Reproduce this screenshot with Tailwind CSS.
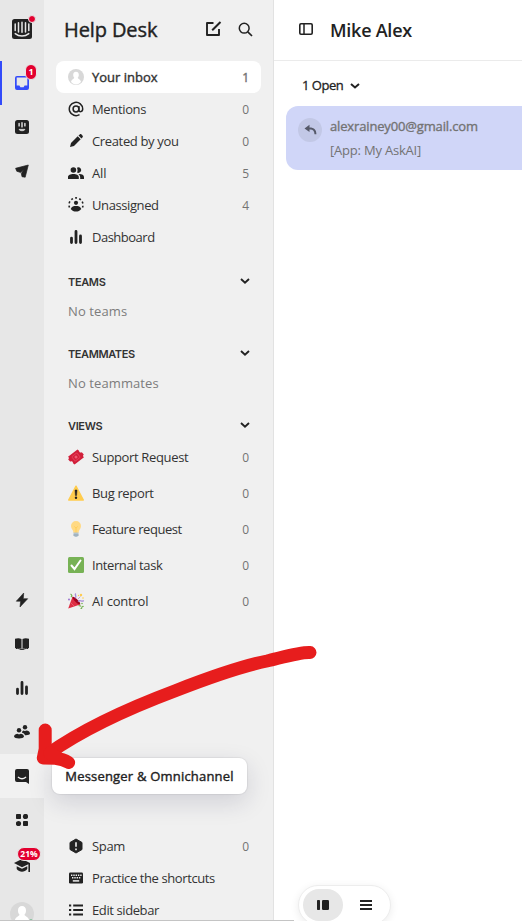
<!DOCTYPE html>
<html lang="en">
<head>
<meta charset="utf-8">
<title>Help Desk</title>
<script src="https://cdn.jsdelivr.net/npm/@tailwindcss/browser@4"></script>
</head>
<body class="relative h-[921px] w-[522px] overflow-hidden bg-white font-['Open_Sans','Noto_Sans',sans-serif] text-[13px] text-[#222]">
<div class="flex h-full">
  <!-- Icon rail -->
  <nav class="flex w-[44px] shrink-0 flex-col bg-[#e7e7e7]">
    <div class="relative flex h-[61px] items-center justify-center pb-[3px]">
      <svg width="20" height="20" viewBox="0 0 20 20"><rect width="20" height="20" rx="2.500" fill="#222"/><path d="M3.200 5v6.500M6.500 3.700v9.300M10 3.300v10M13.500 3.700v9.300M16.800 5v6.500" stroke="#e7e7e7" stroke-width="1.500" stroke-linecap="round"/><path d="M3.200 14.600c4 3.200 9.600 3.200 13.600 0" fill="none" stroke="#e7e7e7" stroke-width="1.400" stroke-linecap="round"/></svg>
      <span class="absolute left-[28px] top-[15px] size-2 rounded-full border border-[#e7e7e7] bg-[#e3002f]"></span>
    </div>
    <div class="relative flex h-11 items-center justify-center border-l-2 border-[#334bfa] pr-[2px]">
      <svg width="14" height="14" viewBox="0 0 14 14"><path fill-rule="evenodd" fill="#334bfa" d="M2 0h10a2 2 0 0 1 2 2v10a2 2 0 0 1-2 2H2a2 2 0 0 1-2-2V2a2 2 0 0 1 2-2Zm-.3 1.600v8h2.700l1 1.700h3.200l1-1.700h2.700v-8Z"/></svg>
      <span class="absolute left-[23px] top-[3px] flex h-4 w-3 items-center justify-center rounded-full border border-[#e7e7e7] bg-[#e3002f] text-[9px] font-bold text-white">1</span>
    </div>
    <div class="flex h-11 items-center justify-center">
      <svg width="14" height="14" viewBox="0 0 14 14"><rect width="14" height="14" rx="2.500" fill="#222"/><path d="M4.100 3.500v2.400M7 2.700v4.200M9.900 3.500v2.400" stroke="#e7e7e7" stroke-width="1.400" stroke-linecap="round"/><path d="M4 9.300h6c-.6 2-5.400 2-6 0Z" fill="#e7e7e7" stroke="#e7e7e7" stroke-width=".5"/></svg>
    </div>
    <div class="flex h-11 items-center justify-center">
      <svg width="14" height="14" viewBox="0 0 14 14"><path d="M13.300 1 10.200 13.200 7 12.700 6.300 9.300l2.500-3.500-3.300 2.600L1.800 7.300.6 4.300Z" fill="#222" stroke="#222" stroke-width=".7" stroke-linejoin="round"/></svg>
    </div>
    <div class="flex-1"></div>
    <div class="flex h-11 shrink-0 items-center justify-center">
      <svg width="14" height="16" viewBox="0 0 14 16"><path d="M8.700 1 1.300 9.200h4.300L5 15l7.700-8.300H8.300Z" fill="#222" stroke="#222" stroke-width=".6" stroke-linejoin="round"/></svg>
    </div>
    <div class="flex h-11 shrink-0 items-center justify-center">
      <svg width="14" height="12" viewBox="0 0 14 12"><path d="M0 .8C2.500-.1 4.700.1 6.500 1v10C4.700 9.800 2.500 9.700 0 10.200ZM14 .8C11.500-.1 9.300.1 7.500 1v10c1.800-1.200 4-1.300 6.500-.8Z" fill="#222"/><path d="M1 10.500c2.500-.2 3.700.3 5 1.100h2c1.300-.8 2.500-1.300 5-1.100" fill="none" stroke="#222"/></svg>
    </div>
    <div class="flex h-11 shrink-0 items-center justify-center">
      <svg width="12" height="14" viewBox="0 0 12 14"><path d="M1.500 8.200v4.300M6 1.500v11M10.500 6v6.500" stroke="#222" stroke-width="2.800" stroke-linecap="round"/></svg>
    </div>
    <div class="flex h-11 shrink-0 items-center justify-center">
      <svg width="16" height="14" viewBox="0 0 16 14" fill="#222"><circle cx="11" cy="2.200" r="2.200"/><circle cx="5" cy="5.300" r="2.200"/><path d="M0 11.500C.3 9.600 2 8.700 3.500 8.700c1.200.8 2 .8 3.200 0 1.600 0 3 .9 3.300 2.800 0 2.600-10 2.600-10 0ZM8.300 6.400l1-.9c1 .6 2.300.6 3.300 0C14.200 5.600 15.600 6.500 16 8.300c0 1.600-2.200 2-5 1.900-.6-1.300-1.600-2-3-2.400Z"/></svg>
    </div>
    <div class="flex h-11 shrink-0 items-center justify-center bg-[#f1f1f1]">
      <svg width="14" height="15" viewBox="0 0 14 15"><path d="M2 0h10a2 2 0 0 1 2 2V15l-3-2H2a2 2 0 0 1-2-2V2a2 2 0 0 1 2-2Z" fill="#222"/><path d="M3.300 8.300c2.200 1.700 5.200 1.700 7.400 0" fill="none" stroke="#f0f0f0" stroke-width="1.300" stroke-linecap="round"/></svg>
    </div>
    <div class="flex h-11 shrink-0 items-center justify-center">
      <svg width="12" height="12" viewBox="0 0 12 12" fill="#222"><rect width="5" height="5" rx=".8"/><circle cx="9.500" cy="2.500" r="2.600"/><circle cx="2.500" cy="9.500" r="2.600"/><rect x="7" y="7" width="5" height="5" rx=".8"/></svg>
    </div>
    <div class="relative flex h-11 shrink-0 items-center justify-center pt-[3px]">
      <svg width="16" height="14" viewBox="0 0 16 14"><path d="M0 4 8 0l8 4v9h-1.600V5.200L8 8.300Z" fill="#222"/><path d="M2.700 7.200 8 9.800l5.300-2.600v2.900C10.500 13.700 5.500 13.700 2.700 10.100Z" fill="#222"/></svg>
      <span class="absolute left-[17px] top-[5px] flex h-[14px] w-[24px] items-center justify-center rounded-full border border-[#e7e7e7] bg-[#e3002f] text-[8.500px] font-bold leading-none text-white">21%</span>
    </div>
    <div class="relative flex h-[35px] shrink-0 justify-center pt-[16px]">
      <svg width="24" height="24" viewBox="0 0 24 24"><circle cx="12" cy="12" r="12" fill="#d8d8d8"/><path d="M12 4c-2.500 0-4 1.800-4 4.400 0 2 .6 3.400 1.600 4.400-.3 1.700-4.600 2-4.800 6.200v5h14.400v-5c-.2-4.200-4.500-4.500-4.800-6.200 1-1 1.600-2.400 1.600-4.400C16 5.800 14.500 4 12 4Z" fill="#fff"/><circle cx="21" cy="20.500" r="3" fill="#16a34a"/></svg>
    </div>
  </nav>

  <!-- Inbox sidebar -->
  <aside class="flex w-[230px] shrink-0 flex-col border-r border-[#e2e2e2] bg-[#f0f0f0] px-3 text-[#333] [&_span]:pt-0.5">
    <header class="flex h-[61px] items-center pb-px pl-2 pr-2">
      <h1 class="flex-1 whitespace-nowrap text-[20px] tracking-[-0.1px] text-[#222] [-webkit-text-stroke:0.4px]">Help Desk</h1>
      <svg class="-mt-0.5 mr-[16px]" width="17" height="16" viewBox="0 0 17 16"><path d="M8.500 2H2v12h12V8" fill="none" stroke="#222" stroke-width="1.900" stroke-linejoin="round"/><path d="M7.200 9.300 15.500 1" stroke="#222" stroke-width="2"/></svg>
      <svg class="-mt-0.5" width="15" height="15" viewBox="0 0 15 15"><circle cx="6.200" cy="6.200" r="4.900" fill="none" stroke="#222" stroke-width="1.500"/><path d="m9.800 9.800 4.200 4.200" stroke="#222" stroke-width="1.700"/></svg>
    </header>
    <div class="flex h-8 items-center rounded-lg bg-white px-3">
      <svg class="mr-2" width="16" height="16" viewBox="0 0 16 16"><circle cx="8" cy="8" r="8" fill="#d8d8d8"/><path d="M8 2.800c-1.700 0-2.800 1.200-2.800 2.900 0 1.400.4 2.300 1.100 3-.2 1.100-2.800 1.500-3.300 4 1.300 1.700 3 2.700 5 2.700s3.700-1 5-2.700c-.5-2.500-3.100-2.900-3.300-4 .7-.7 1.100-1.600 1.100-3C10.800 4 9.700 2.800 8 2.800Z" fill="#fff"/></svg>
      <span class="flex-1 [-webkit-text-stroke:0.4px]">Your inbox</span><span class="text-[12px] text-[#737373] [-webkit-text-stroke:0.4px]">1</span>
    </div>
    <div class="flex h-8 items-center px-3">
      <svg class="mr-2" width="16" height="16" viewBox="0 0 16 16" fill="none" stroke="#222" stroke-width="1.500"><circle cx="8" cy="8" r="2.900"/><path d="M10.900 5v4.100c0 2.200 3.800 2.200 3.800-1.100a6.700 6.700 0 1 0-3.200 5.700"/></svg>
      <span class="flex-1 tracking-[-0.35px]">Mentions</span><span class="text-[12px] text-[#737373]">0</span>
    </div>
    <div class="flex h-8 items-center px-3">
      <svg class="mr-2" width="16" height="16" viewBox="0 0 16 16" fill="#222"><path d="m2 14 1-4 6.700-6.700 3 3L6 13ZM10.500 2.500 12 1.200c.8-.8 3.600 2 2.800 2.800l-1.300 1.500Z"/></svg>
      <span class="flex-1 tracking-[-0.35px]">Created by you</span><span class="text-[12px] text-[#737373]">0</span>
    </div>
    <div class="flex h-8 items-center px-3">
      <svg class="mr-2" width="16" height="16" viewBox="0 0 16 16" fill="#222"><circle cx="5.400" cy="5" r="2.800"/><path d="M0 14v-2c0-2.100 2.500-3 5.400-3s5.400.9 5.400 3v2ZM8.900 2.700A2.800 2.800 0 1 1 9 7.500C9.800 6 9.800 4.300 8.900 2.700ZM10.500 9c3-.3 5.500.8 5.500 3v2h-3.800c.2-2.300-.3-3.800-1.700-5Z"/></svg>
      <span class="flex-1 tracking-[-0.1px]">All</span><span class="text-[12px] text-[#737373]">5</span>
    </div>
    <div class="flex h-8 items-center px-3">
      <svg class="mr-2" width="16" height="16" viewBox="0 0 16 16" fill="#222"><circle cx="8" cy="5.800" r="2.100"/><path d="M2.700 12C3.500 9.300 5.700 8.900 8 8.900s4.500.4 5.300 3.100c-2.400 3.400-8.200 3.400-10.600 0Z"/><path d="M1.500 10.500a7 7 0 1 1 13 0" fill="none" stroke="#222" stroke-width="1.600" stroke-dasharray="2 2.200"/></svg>
      <span class="flex-1 tracking-[-0.4px]">Unassigned</span><span class="text-[12px] text-[#737373]">4</span>
    </div>
    <div class="flex h-8 items-center px-3">
      <svg class="mr-2" width="16" height="16" viewBox="0 0 16 16"><path d="M3.500 9.200v4.300M8 2.500v11M12.500 7v6.500" stroke="#222" stroke-width="2.800" stroke-linecap="round"/></svg>
      <span class="flex-1 tracking-[-0.5px]">Dashboard</span>
    </div>

    <div class="mt-[14px] flex h-7 items-center justify-between px-3 font-['Inter',sans-serif] text-[11px] font-semibold tracking-[-0.35px]"><span>TEAMS</span><svg class="-mr-px" width="10" height="6" viewBox="0 0 10 6"><path d="m1 1 4 3.700L9 1" fill="none" stroke="#222" stroke-width="1.900"/></svg></div>
    <div class="flex h-8 items-center px-3 pt-0.5 tracking-[0.1px] text-[#7c7c7c]">No teams</div>
    <div class="mt-[12px] flex h-7 items-center justify-between px-3 font-['Inter',sans-serif] text-[11px] font-semibold tracking-[-0.4px]"><span>TEAMMATES</span><svg class="-mr-px" width="10" height="6" viewBox="0 0 10 6"><path d="m1 1 4 3.700L9 1" fill="none" stroke="#222" stroke-width="1.900"/></svg></div>
    <div class="flex h-8 items-center px-3 pt-0.5 tracking-[0.1px] text-[#7c7c7c]">No teammates</div>
    <div class="mt-[12px] flex h-7 items-center justify-between px-3 font-['Inter',sans-serif] text-[11px] font-semibold tracking-[-0.35px]"><span>VIEWS</span><svg class="-mr-px" width="10" height="6" viewBox="0 0 10 6"><path d="m1 1 4 3.700L9 1" fill="none" stroke="#222" stroke-width="1.900"/></svg></div>
    <div class="flex h-9 items-center px-3">
      <svg class="mr-2" width="16" height="16" viewBox="0 0 16 16"><path d="M9.500.4 11 1.700c0 1.500 1.600 2.400 2.800 1.500l2 2.300c-1.200 1-.8 2.200.2 2.700L6.600 15.600 5 14.300c.2-1.700-1.500-2.500-2.700-1.600L.2 10.400c1-.8.9-2.100-.2-2.600Z" fill="#d11f3a"/><rect x="5.200" y="4.800" width="5.600" height="6.400" rx=".8" transform="rotate(50 8 8)" fill="none" stroke="#e23d56"/><circle cx="8" cy="8" r="1.500" fill="#ef5a70"/></svg>
      <span class="flex-1 tracking-[-0.35px]">Support Request</span><span class="text-[12px] text-[#737373]">0</span>
    </div>
    <div class="flex h-9 items-center px-3">
      <svg class="mr-2" width="16" height="16" viewBox="0 0 16 16"><path d="M8 1.200 15.300 15H.7Z" fill="#ffcc4d" stroke="#ffcc4d" stroke-width="1.400" stroke-linejoin="round"/><path d="M7 5h2l-.4 5.500H7.400Z" fill="#231f20" stroke="#231f20" stroke-width=".5"/><circle cx="8" cy="12.800" r="1.200" fill="#231f20"/></svg>
      <span class="flex-1 tracking-[-0.35px]">Bug report</span><span class="text-[12px] text-[#737373]">0</span>
    </div>
    <div class="flex h-9 items-center px-3">
      <svg class="mr-2" width="16" height="16" viewBox="0 0 16 16"><path d="M8 0a5 5 0 0 0-5 5c0 3 2.500 4 2.500 7h5c0-3 2.500-4 2.500-7a5 5 0 0 0-5-5Z" fill="#ffd983"/><path d="M6.300 5.500 8 7l1.700-1.500M8 7v5" fill="none" stroke="#ffcc4d" stroke-width=".8"/><path d="M5.500 11.600h5v2.800L9 16H7l-1.500-1.600Z" fill="#b3c4d0"/><path d="M5.500 14h5" stroke="#8899a6" stroke-width=".8"/></svg>
      <span class="flex-1 tracking-[-0.45px]">Feature request</span><span class="text-[12px] text-[#737373]">0</span>
    </div>
    <div class="flex h-9 items-center px-3">
      <svg class="mr-2" width="16" height="16" viewBox="0 0 16 16"><rect width="16" height="16" rx="1.500" fill="#77b255"/><path d="m3.500 8.500 3 3.500 6-8.500" fill="none" stroke="#fff" stroke-width="2" stroke-linecap="round"/></svg>
      <span class="flex-1 tracking-[-0.4px]">Internal task</span><span class="text-[12px] text-[#737373]">0</span>
    </div>
    <div class="flex h-9 items-center px-3">
      <svg class="mr-2" width="16" height="16" viewBox="0 0 16 16"><path d="M.2 15.500 4.500 3.800l7.700 7.800Z" fill="#dd2e44"/><path d="M4.500 3.800c1.800-1 8.900 5.500 7.700 7.800-2 .4-8.300-5.600-7.700-7.800Z" fill="#a0041e"/><path d="m3 10 3 3" stroke="#ea596e"/><path d="M2.500 1c1.700 1 1.700 2.200.4 3M12.500 15.500c2.500.5 0-2.700 3.200-2M10.500 12.500l2.500.6" fill="none" stroke="#77b255" stroke-width="1.200"/><path d="M7 5C9.500 3.500 5.800 1.700 8 .6M10 8.500c2.300-2.500 3.500 1 5.800-1" fill="none" stroke="#aa8dd8" stroke-width="1.300"/><path d="m9.500 6.500 3-3" stroke="#c9a0dc"/><g fill="#ffcc4d"><circle cx="13" cy="2" r="1.200"/><circle cx="10.500" cy="2.500" r=".7"/><circle cx="15" cy="5" r=".8"/></g><circle cx="1" cy="6.500" r=".9" fill="#9266cc"/><circle cx="14" cy="10.500" r=".8" fill="#77b255"/></svg>
      <span class="flex-1 tracking-[-0.2px]">AI control</span><span class="text-[12px] text-[#737373]">0</span>
    </div>
    <div class="flex-1"></div>
    <div class="flex h-8 shrink-0 items-center px-3">
      <svg class="mr-2" width="16" height="16" viewBox="0 0 16 16"><path d="m8 1 6 3.500v7L8 15l-6-3.500v-7Z" fill="#222" stroke="#222" stroke-linejoin="round"/><path d="M8 4.200v4.500M8 10.500v1.700" stroke="#f0f0f0" stroke-width="1.600"/></svg>
      <span class="flex-1 tracking-[-0.35px]">Spam</span><span class="text-[12px] text-[#737373]">0</span>
    </div>
    <div class="flex h-8 shrink-0 items-center px-3">
      <svg class="mr-2" width="16" height="16" viewBox="0 0 16 16"><rect x="1" y="2.500" width="14" height="11" rx="1.200" fill="#222"/><path d="M3 5.200h11M4 7.700h9" stroke="#f0f0f0" stroke-width="1.400" stroke-dasharray="1.400 .9"/><path d="M4.800 10.900h6.400" stroke="#f0f0f0" stroke-width="1.500"/></svg>
      <span class="flex-1 whitespace-nowrap tracking-[-0.4px]">Practice the shortcuts</span>
    </div>
    <div class="-mb-[5px] flex h-8 shrink-0 items-center px-3">
      <svg class="mr-2" width="16" height="16" viewBox="0 0 16 16"><path d="M1 3.500h2.200M1 8h2.200M1 12.500h2.200M5.200 3.500H15M5.200 8H15M5.200 12.500H15" stroke="#222" stroke-width="2"/></svg>
      <span class="flex-1 tracking-[-0.4px]">Edit sidebar</span>
    </div>
  </aside>

  <!-- Conversation list -->
  <main class="flex min-w-0 flex-1 flex-col">
    <header class="flex h-[61px] shrink-0 items-center border-b border-[#ebebeb] pl-[25px]">
      <svg class="-mt-[3px] mr-[17px]" width="14" height="12" viewBox="0 0 14 12"><rect x=".8" y=".8" width="12.400" height="10.400" rx="1.200" fill="none" stroke="#222" stroke-width="1.600"/><path d="M5 1v10" stroke="#222" stroke-width="1.500"/></svg>
      <h2 class="whitespace-nowrap pt-px text-[18px] font-semibold tracking-[-0.25px]">Mike Alex</h2>
    </header>
    <div class="flex h-[45px] shrink-0 items-center pl-[28px] pt-[4px]"><span class="tracking-[-0.5px] [-webkit-text-stroke:0.3px]">1 Open</span><svg class="ml-[7px]" width="10" height="6" viewBox="0 0 10 6"><path d="m1 1 4 3.500L9 1" fill="none" stroke="#222" stroke-width="2"/></svg></div>
    <article class="ml-3 flex h-16 shrink-0 rounded-l-xl bg-[#d0d6f8] pl-3 pt-3 text-[#737373]">
      <div class="mr-2 flex size-6 shrink-0 items-center justify-center rounded-full bg-[#c2c8e6]"><svg width="13" height="12" viewBox="0 0 13 12"><path d="M5.500.8.500 4.400l5 3.700V5.500c3.600-.3 4.800 1.500 5 4.700h1.900C12.400 5.800 10.300 3.500 5.500 3.500Z" fill="#555968"/></svg></div>
      <div class="-mt-1 whitespace-nowrap leading-6"><div class="tracking-[-0.15px] [-webkit-text-stroke:0.35px]">alexrainey00@gmail.com</div><div class="tracking-[-0.2px]">[App: My AskAI]</div></div>
    </article>
    <div class="flex-1"></div>
    <div class="-mb-[4px] ml-[24px] flex h-[40px] w-[93px] shrink-0 items-center rounded-full border border-[#ededed] bg-white px-1 shadow-[0_2px_8px_rgba(0,0,0,.08)]">
      <div class="flex h-8 w-10 items-center justify-center rounded-full bg-[#e7e7e7]"><svg width="12" height="10" viewBox="0 0 12 10" fill="#222"><rect width="3" height="10" rx=".7"/><rect x="5" width="7" height="10" rx="1.200"/></svg></div>
      <div class="ml-1 flex h-8 w-10 items-center justify-center"><svg width="12" height="10" viewBox="0 0 12 10"><path d="M0 1h12M0 5h12M0 9h12" stroke="#222" stroke-width="2"/></svg></div>
    </div>
  </main>
</div>

<!-- Tooltip for the hovered rail item -->
<div class="absolute left-[52px] top-[758px] flex h-9 w-[195px] items-center justify-center whitespace-nowrap rounded-lg bg-white pt-0.5 shadow-[0_0_1px_1px_rgba(0,0,0,.06),0_8px_24px_rgba(30,30,70,.15)]"><span class="tracking-[0.2px] [-webkit-text-stroke:0.4px]">Messenger &amp; Omnichannel</span></div>
<!-- Pointer annotation -->
<svg class="pointer-events-none absolute left-0 top-0" width="522" height="921" viewBox="0 0 522 921" fill="none" stroke="#e71d1d" stroke-width="13" stroke-linecap="round" stroke-linejoin="round"><path d="M310 652.500C300 652 282 657.500 267 661C238 667 208 678 176 690.500C124 710 83 729 48 754"/><path d="M45.200 730v19L43.300 758l12 .3c6 .8 9 1.700 13.300 4.200"/><path d="m50 753 8 5"/></svg>
<div class="absolute bottom-0 left-0 h-px w-[294px] bg-[#c4c4c4]"></div>
</body>
</html>
